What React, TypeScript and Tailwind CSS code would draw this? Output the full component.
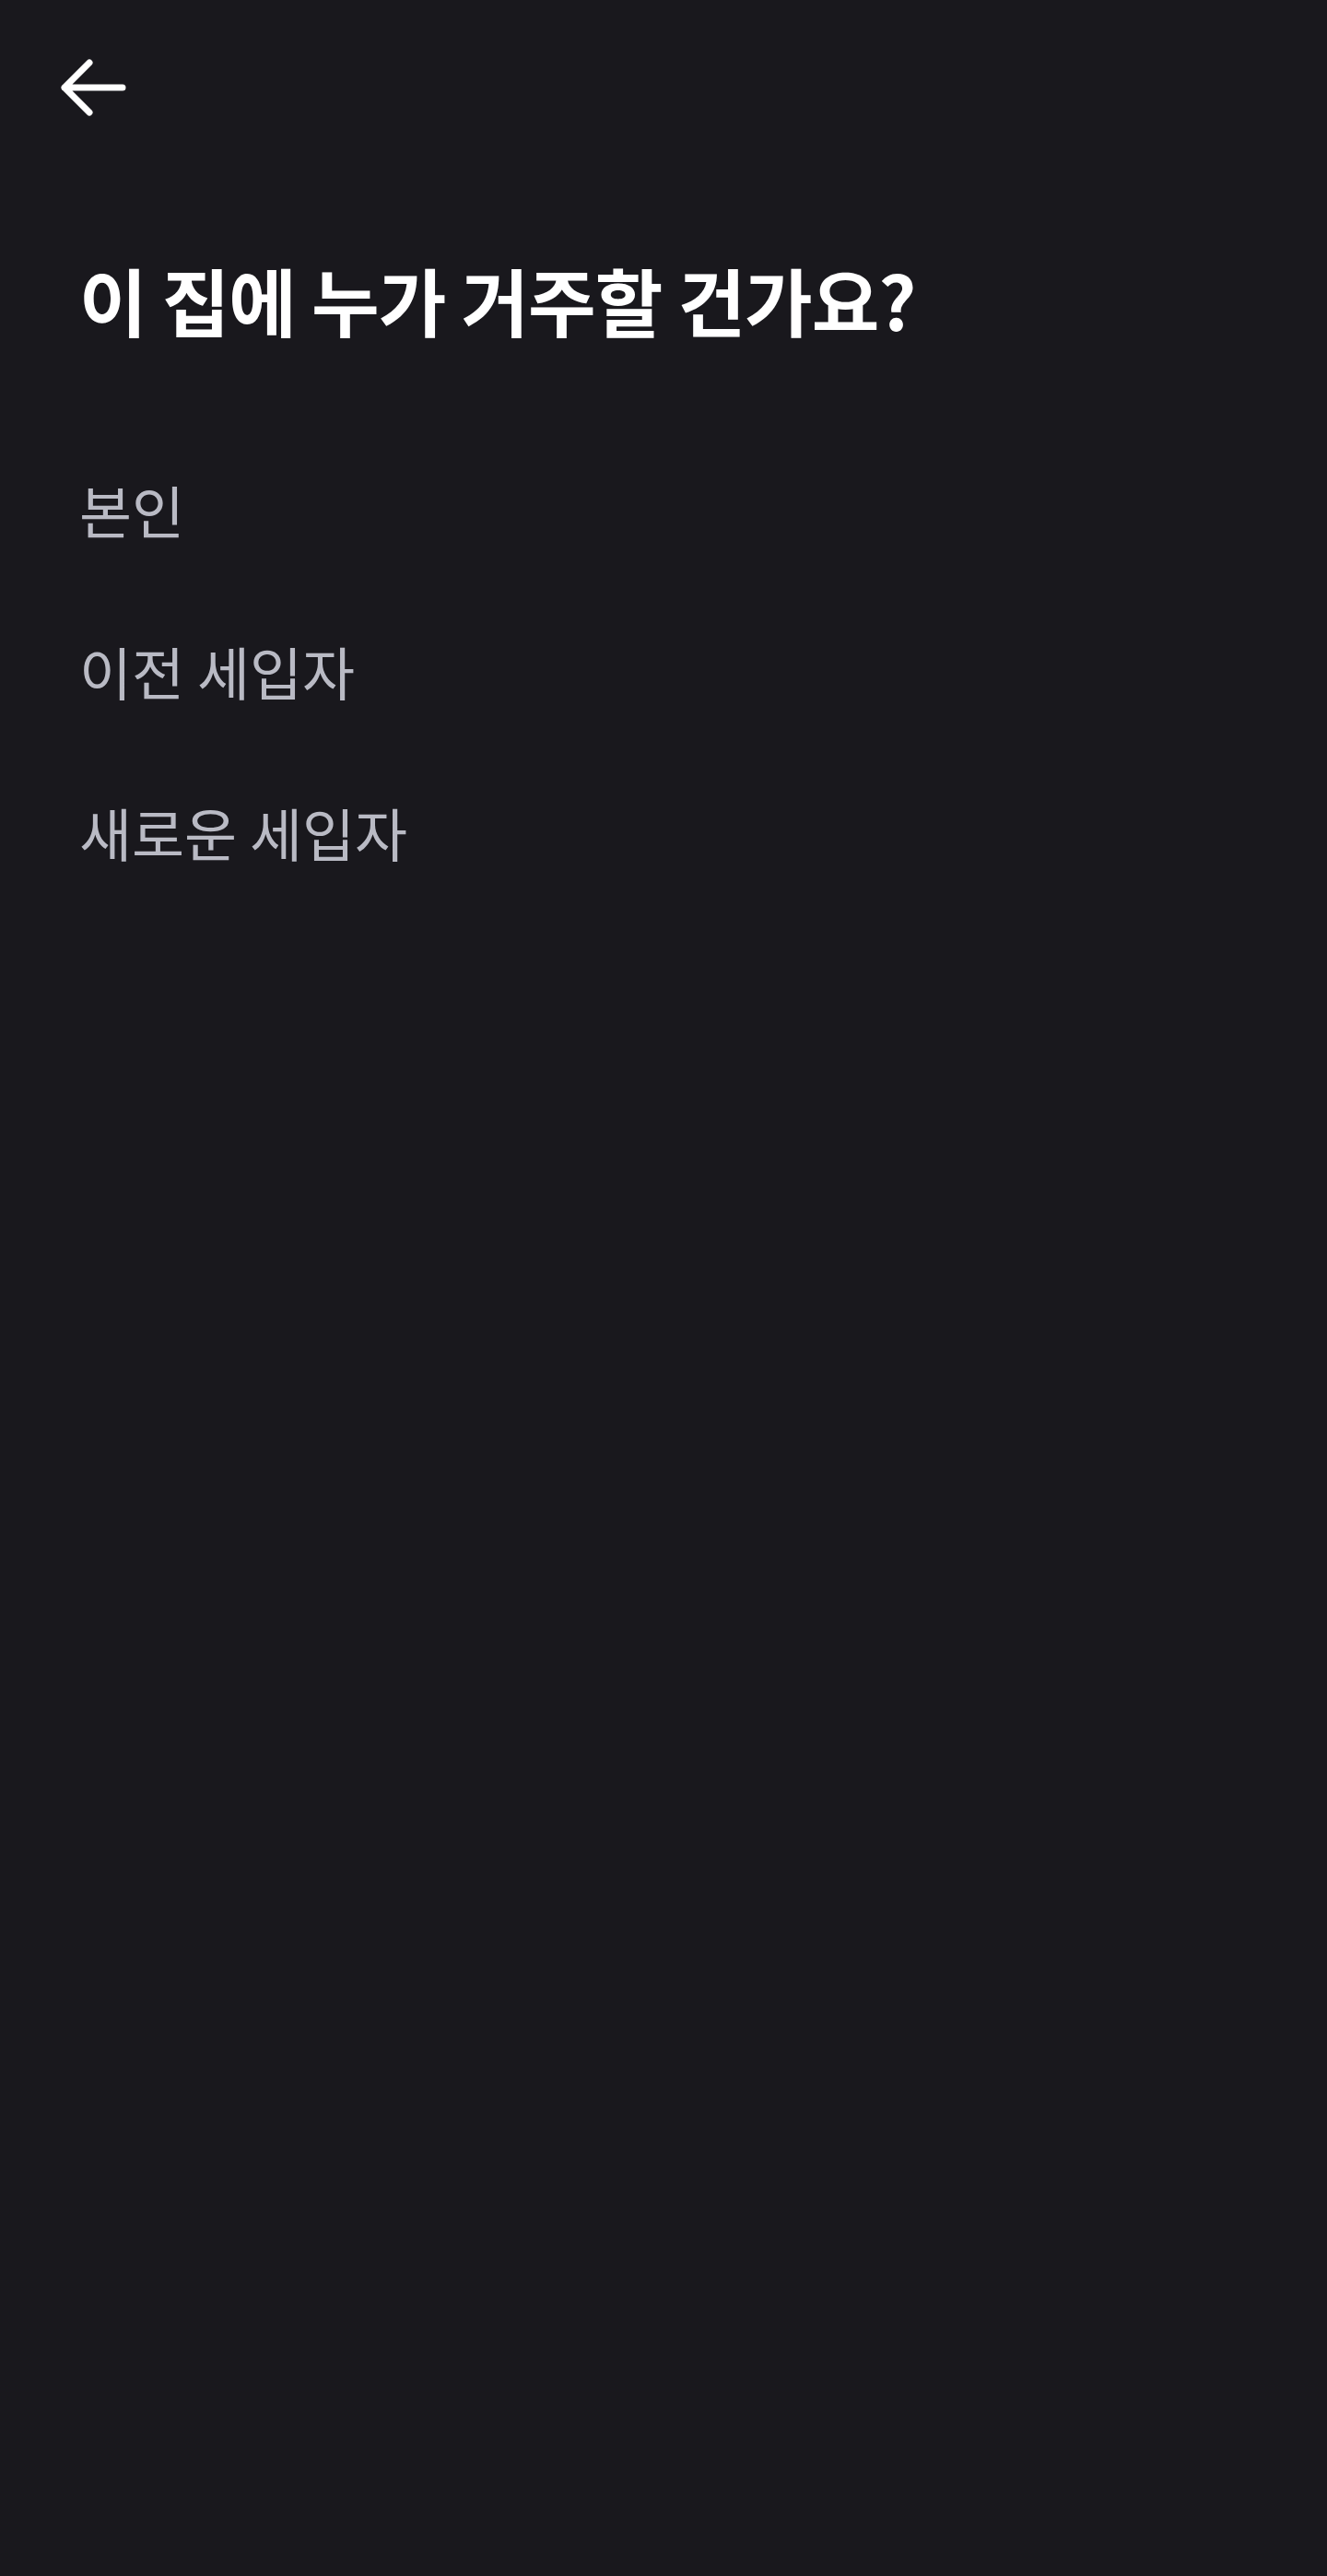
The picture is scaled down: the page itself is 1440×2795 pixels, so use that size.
const options = ["본인", "이전 세입자", "새로운 세입자"];

const App = () => {
  return (
    <div className="min-h-[2795px] w-full bg-[#19181d] font-['Noto_Sans_CJK_KR','Noto_Sans',sans-serif]">
      {/* Top bar */}
      <div className="flex h-[284px] items-start pl-[60px] pt-[58px]">
        <button className="flex h-[74px] w-[80px] items-center justify-center text-white">
          <svg width="80" height="74" viewBox="0 0 80 74" fill="none">
            <path
              d="M37 10 L10 37 L37 64 M10 37 H73"
              stroke="currentColor"
              strokeWidth="7"
              strokeLinecap="round"
              strokeLinejoin="round"
            />
          </svg>
        </button>
      </div>

      <div className="px-[86px]">
        <h1 className="text-[80px] font-bold leading-none text-white tracking-[-1px]">
          이 집에 누가 거주할 건가요?
        </h1>

        <ul className="mt-[158px] flex flex-col gap-[113px]">
          {options.map((option) => (
            <li key={option} className="text-[62px] leading-none text-[#b9bac4] cursor-pointer">
              {option}
            </li>
          ))}
        </ul>
      </div>
    </div>
  );
};

export default App;
